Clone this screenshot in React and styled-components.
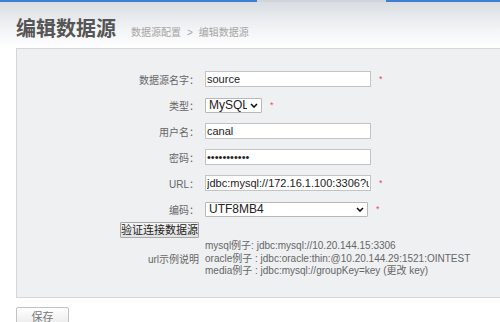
import styled, { createGlobalStyle } from "styled-components";

const GlobalStyle = createGlobalStyle`
  body {
    margin: 0;
    background: #fff;
    font-family: "Liberation Sans", Arial, "Noto Sans CJK SC", sans-serif;
  }
`;

const rows = [
  { label: "数据源名字：", kind: "text", value: "source", width: 166, required: true },
  { label: "类型：", kind: "select", value: "MySQL", width: 57, required: true },
  { label: "用户名：", kind: "text", value: "canal", width: 166 },
  { label: "密码：", kind: "password", value: "12345678901", width: 166 },
  { label: "URL：", kind: "text", value: "jdbc:mysql://172.16.1.100:3306?useUnicode=true", width: 166, required: true },
  { label: "编码：", kind: "select", value: "UTF8MB4", width: 163, required: true },
];

const examples = [
  "mysql例子: jdbc:mysql://10.20.144.15:3306",
  "oracle例子 : jdbc:oracle:thin:@10.20.144.29:1521:OINTEST",
  "media例子 : jdbc:mysql://groupKey=key (更改 key)",
];

function Dropdown({ width, value }) {
  return (
    <SelectBox $width={width}>
      <Select defaultValue={value}>
        <option>{value}</option>
      </Select>
      <Chevron width="8" height="5" viewBox="0 0 8 5">
        <path d="M1 1 L4 4 L7 1" fill="none" stroke="#111" strokeWidth="1.6" />
      </Chevron>
    </SelectBox>
  );
}

function App() {
  return (
    <Page>
      <GlobalStyle />
      <TopBar>
        <Stripe $color="#3f7fd1" $width="257px" />
        <Stripe $color="#d0d5dc" $width="129px" />
        <Stripe $color="#3f7fd1" $grow />
      </TopBar>
      <Header>
        <Title>编辑数据源</Title>
        <Crumbs>
          数据源配置<Sep>&gt;</Sep>编辑数据源
        </Crumbs>
      </Header>
      <Panel>
        {rows.map((r) => (
          <Row key={r.label}>
            <Label>{r.label}</Label>
            {r.kind === "select" ? (
              <Dropdown width={r.width} value={r.value} />
            ) : (
              <Input $width={r.width} type={r.kind} defaultValue={r.value} />
            )}
            {r.required && <Star>*</Star>}
          </Row>
        ))}
        <ButtonRow>
          <CheckButton>验证连接数据源</CheckButton>
        </ButtonRow>
        <Examples>
          <Label as="div">url示例说明</Label>
          <ExampleList>
            {examples.map((e) => (
              <div key={e}>{e}</div>
            ))}
          </ExampleList>
        </Examples>
      </Panel>
      <SaveButton>保存</SaveButton>
    </Page>
  );
}

export default App;

const Page = styled.div`
  width: 500px;
  height: 322px;
  overflow: hidden;
`;

const TopBar = styled.div`
  display: flex;
  height: 2px;
`;

const Stripe = styled.div`
  background: ${(p) => p.$color};
  width: ${(p) => p.$width || "auto"};
  flex: ${(p) => (p.$grow ? 1 : "none")};
`;

const Header = styled.div`
  height: 46px;
  box-sizing: border-box;
  padding: 15px 16px 0;
  display: flex;
  align-items: baseline;
  background: linear-gradient(#d9dde2, #f3f4f6 60%, #ffffff);
`;

const Title = styled.h1`
  margin: 0;
  font-size: 20px;
  line-height: 24px;
  font-weight: bold;
  color: #555;
`;

const Crumbs = styled.span`
  margin-left: 15px;
  font-size: 10px;
  color: #a5a5a5;
`;

const Sep = styled.span`
  margin: 0 6px;
`;

const Panel = styled.div`
  margin-left: 16px;
  height: 250px;
  box-sizing: border-box;
  padding-top: 17px;
  border: 1px solid #d6d6d6;
  border-right: none;
  background: #eff0f2;
`;

const Row = styled.div`
  display: flex;
  align-items: center;
  height: 26px;
`;

const Label = styled.label`
  width: 182px;
  flex: none;
  text-align: right;
  font-size: 10px;
  color: #666;
  margin-right: 6px;
`;

const fieldBase = `
  box-sizing: border-box;
  height: 16px;
  border: 1px solid #c4c4c4;
  background: #fff;
  font-family: "Liberation Sans", Arial, sans-serif;
  font-size: 11px;
  color: #222;
  margin: 0;
`;

const Input = styled.input`
  ${fieldBase}
  width: ${(p) => p.$width}px;
  padding: 0 1px;
  outline: none;
`;

const SelectBox = styled.span`
  position: relative;
  display: inline-flex;
  width: ${(p) => p.$width}px;
`;

const Select = styled.select`
  ${fieldBase}
  appearance: none;
  width: 100%;
  height: 15px;
  padding: 0 14px 0 3px;
  font-size: 12px;
  line-height: 13px;
  border-color: #b8b8b8;
  border-radius: 1px;
`;

const Chevron = styled.svg`
  position: absolute;
  right: 4px;
  top: 5px;
  pointer-events: none;
`;

const Star = styled.span`
  margin-left: 8px;
  color: #ee4466;
  font-size: 9px;
  line-height: 1;
`;

const ButtonRow = styled.div`
  width: 182px;
  display: flex;
  justify-content: flex-end;
  margin-bottom: 2px;
`;

const CheckButton = styled.button`
  height: 16px;
  padding: 0;
  border: 1px solid #a8a8a8;
  border-radius: 1px;
  background: linear-gradient(#f4f4f4, #e2e2e2);
  font-family: "Liberation Sans", "Noto Sans CJK SC", sans-serif;
  font-size: 11px;
  line-height: 14px;
  color: #222;
`;

const Examples = styled.div`
  display: flex;
  align-items: center;
`;

const ExampleList = styled.div`
  font-size: 10px;
  line-height: 12.5px;
  color: #666;
  white-space: nowrap;
`;

const SaveButton = styled.button`
  display: block;
  margin: 9px 0 0 16px;
  width: 53px;
  height: 18px;
  padding: 0;
  border: 1px solid #c2c2c2;
  border-radius: 2px;
  background: linear-gradient(#ffffff, #ececec);
  font-family: "Liberation Sans", "Noto Sans CJK SC", sans-serif;
  font-size: 11px;
  color: #777;
`;
